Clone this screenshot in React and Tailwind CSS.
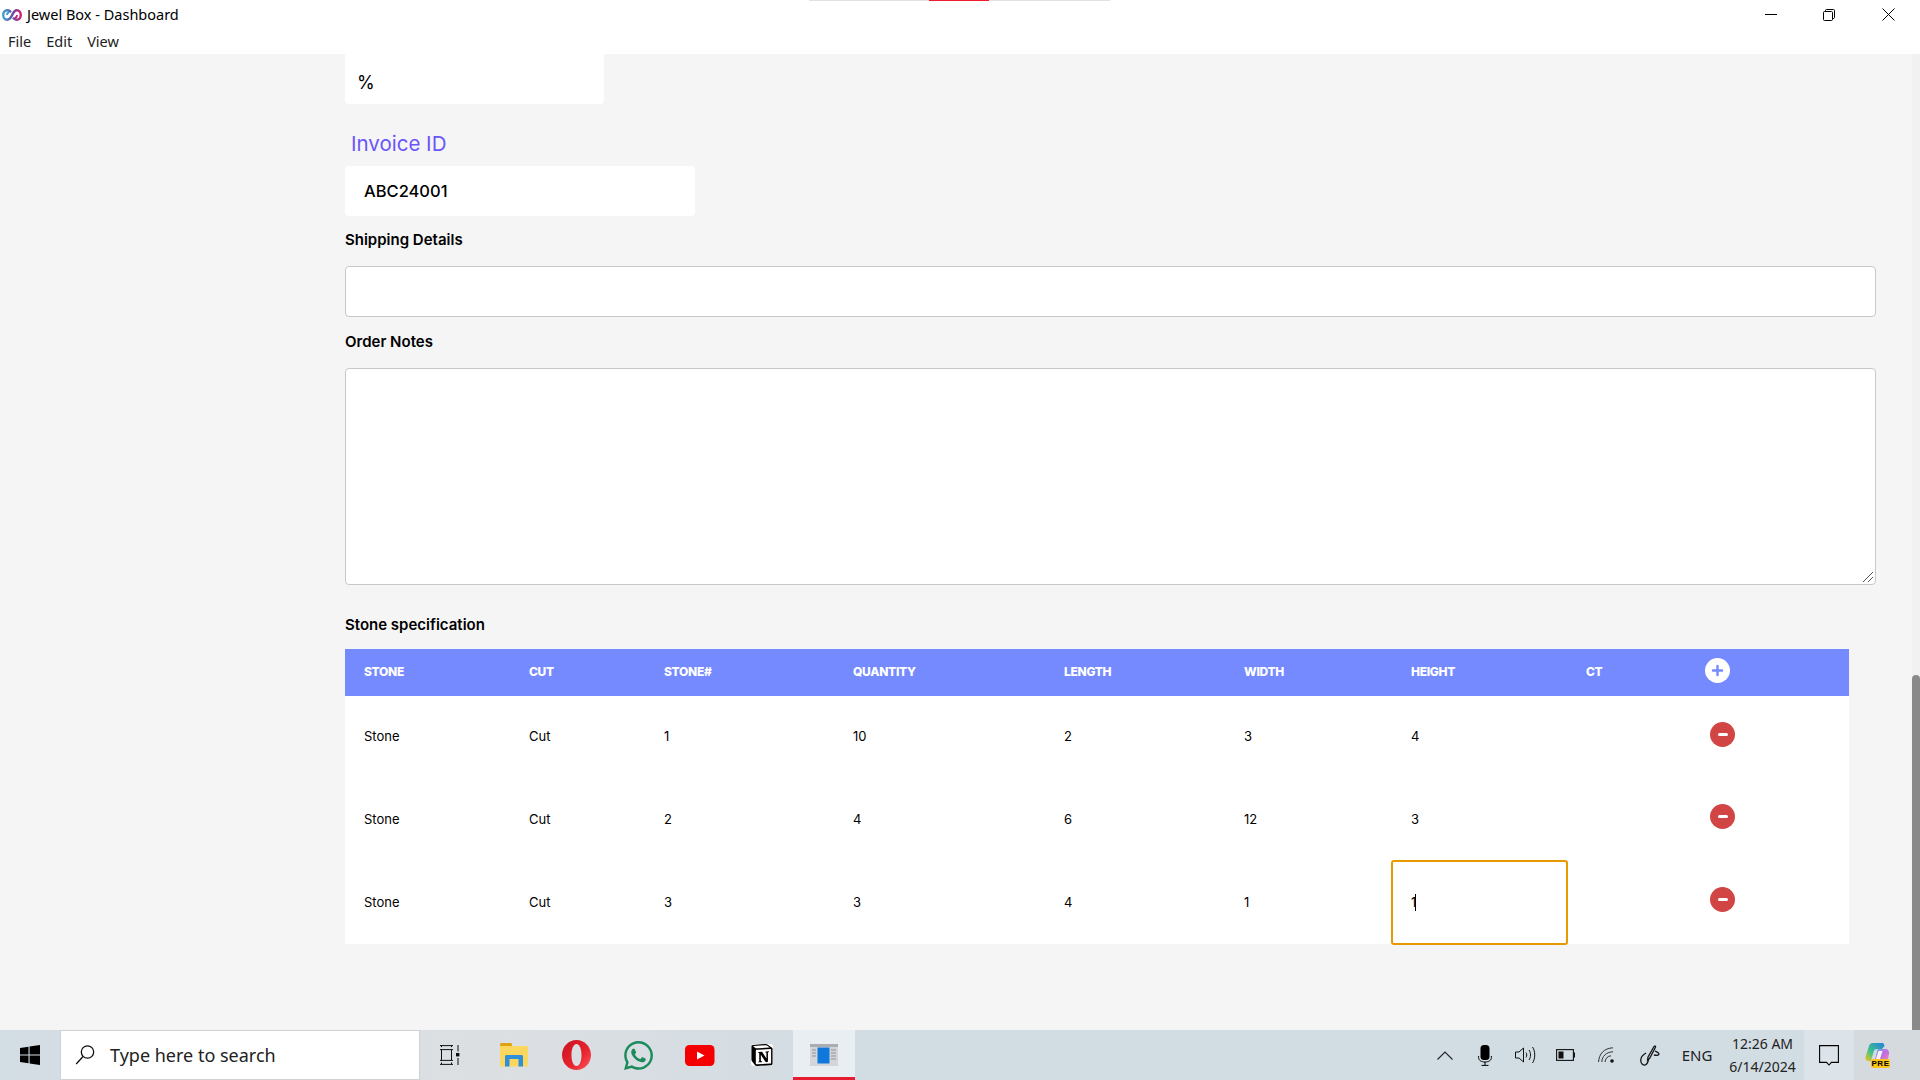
import React from "react";
import { FaWhatsapp } from "react-icons/fa";
import { SiNotion } from "react-icons/si";

const rows = [
  ["Stone", "Cut", "1", "10", "2", "3", "4", ""],
  ["Stone", "Cut", "2", "4", "6", "12", "3", ""],
  ["Stone", "Cut", "3", "3", "4", "1", "1", ""],
];
const heads = ["STONE", "CUT", "STONE#", "QUANTITY", "LENGTH", "WIDTH", "HEIGHT", "CT"];

function MinusBtn() {
  return (
    <span className="mb-[6px] ml-[19px] flex h-[25px] w-[25px] items-center justify-center rounded-full bg-[#d14545]">
      <span className="h-[3px] w-[10px] rounded-sm bg-white" />
    </span>
  );
}

function PlusBtn() {
  return (
    <span className="mb-[5px] ml-[14px] flex h-[25px] w-[25px] items-center justify-center rounded-full bg-white">
      <svg width="13" height="13" viewBox="0 0 13 13"><path d="M6.5 2v9M2 6.5h9" stroke="#758aff" strokeWidth="2.4" strokeLinecap="round" /></svg>
    </span>
  );
}

function Logo() {
  return (
    <svg width="20" height="12" viewBox="0 0 20 12" fill="none">
      <defs>
        <linearGradient id="lg" x1="0" x2="1" y1="0" y2="0">
          <stop offset="0" stopColor="#3aa6c9" />
          <stop offset="0.5" stopColor="#5a4fa8" />
          <stop offset="1" stopColor="#d41f72" />
        </linearGradient>
      </defs>
      <path d="M9 3.2C7.8 1.8 6.6 1.3 5.2 1.3 2.9 1.3 1.2 3.2 1.2 6s1.7 4.7 4 4.7c2.6 0 3.8-2.2 5-4.7s2.4-4.7 4.6-4.7c2.3 0 4 1.9 4 4.7s-1.7 4.7-4 4.7c-1.4 0-2.6-.5-3.8-1.9" stroke="url(#lg)" strokeWidth="2.4" />
      <path d="M5 6c0-1.6 1-2.6 2.2-2.6M15 6c0 1.600-1 2.600-2.200 2.600" stroke="url(#lg)" strokeWidth="1.800" />
    </svg>
  );
}

function WinLogo() {
  return (
    <svg width="20" height="20" viewBox="0 0 20 20" fill="#000">
      <path d="M0 3l8.5-1.3v7.8H0zM9.6 1.500L20 0v9.500H9.600zM0 10.600h8.500v7.700L0 17zM9.600 10.600H20V20L9.600 18.500z" />
    </svg>
  );
}

function SearchIcon() {
  return (
    <svg width="20" height="22" viewBox="0 0 20 22" fill="none" stroke="#111" strokeWidth="1.3">
      <circle cx="12.5" cy="8" r="6.2" />
      <path d="M8 12.5L1.2 20" />
    </svg>
  );
}

function TaskView() {
  return (
    <svg width="20" height="20" viewBox="0 0 20 20" fill="none" stroke="#111" strokeWidth="1">
      <path d="M0 .6h13M0 4.600h13M0 15.400h13M0 19.400h13" />
      <path d="M1.500 .6v1.500M11.500 .6v1.500M1.500 4.600v10.800M11.500 4.600v10.800M1.500 17.500v1.900M11.500 17.500v1.900" />
      <path d="M18 0v6.500M18 13v7" />
      <rect x="16" y="8" width="3.400" height="3.400" fill="#111" stroke="none" />
    </svg>
  );
}

function Folder() {
  return (
    <svg width="28" height="24" viewBox="0 0 28 24">
      <path d="M0 1.500C0 .7.7 0 1.500 0h9c.8 0 1.500.7 1.500 1.500V4H0z" fill="#dfa20f" />
      <path d="M0 3h26.500c.8 0 1.500.7 1.500 1.500V22c0 .8-.7 1.500-1.500 1.500h-25C.700 23.500 0 22.800 0 22z" fill="#fbd75f" />
      <path d="M5 23.500V13.500C5 12.600 5.700 12 6.500 12h15c.8 0 1.500.6 1.500 1.500v10h-4.500V16h-9v7.500z" fill="#2f8fdb" />
    </svg>
  );
}

function Opera() {
  return (
    <svg width="29" height="30" viewBox="0 0 29 30">
      <defs>
        <linearGradient id="op" x1="0" x2="1" y1="0" y2="1">
          <stop offset="0" stopColor="#c9121f" />
          <stop offset="0.6" stopColor="#e8242f" />
          <stop offset="1" stopColor="#ff5a5f" />
        </linearGradient>
      </defs>
      <path fillRule="evenodd" d="M14.500 0C22.500 0 29 6.700 29 15s-6.500 15-14.500 15S0 23.300 0 15 6.500 0 14.500 0zM14.500 4C11.300 4 9.500 9 9.500 15s1.800 11 5 11 5-5 5-11-1.800-11-5-11z" fill="url(#op)" />
    </svg>
  );
}

function YouTube() {
  return (
    <svg width="30" height="21" viewBox="0 0 30 21">
      <rect width="29.500" height="21" rx="4.500" fill="#f50000" />
      <path d="M12 6.500l7.500 4-7.500 4z" fill="#fff" />
    </svg>
  );
}

function AppIcon() {
  return (
    <svg width="28" height="22" viewBox="0 0 28 22">
      <rect width="28" height="22" fill="#d3d5d8" />
      <rect width="28" height="3" fill="#a9acb0" />
      <rect x="7.500" y="3.500" width="12" height="16" fill="#0f78dc" />
      <path d="M2 6h4M2 9h4M2 12h4M21 6h5M21 9h5M21 12h5M21 15h5" stroke="#8f9397" strokeWidth="1" />
    </svg>
  );
}

function Mic() {
  return (
    <svg width="14" height="21" viewBox="0 0 14 21" fill="none">
      <rect x="2.500" y="0" width="9" height="15" rx="3.500" fill="#000" />
      <path d="M.6 11v1.500C.6 15.500 3.500 17 7 17s6.400-1.500 6.400-4.500V11M7 17v3M3.500 20.400h7" stroke="#000" strokeWidth="1" />
    </svg>
  );
}

function Speaker() {
  return (
    <svg width="21" height="18" viewBox="0 0 21 18" fill="none" stroke="#111" strokeWidth="1">
      <path d="M.5 6h3.500L8.500 2v14L4 12H.5z" />
      <path d="M11 6.500c1 1.500 1 3.500 0 5M14 4c2 3 2 7 0 10M17.500 1c3 4.500 3 11.500 0 16" />
    </svg>
  );
}

function Battery() {
  return (
    <svg width="19" height="12" viewBox="0 0 19 12" fill="none">
      <rect x=".6" y=".6" width="16.800" height="10.800" stroke="#111" strokeWidth="1.100" />
      <rect x="2.500" y="2.500" width="5" height="7" fill="#111" />
      <rect x="17.500" y="3.500" width="1.500" height="5" fill="#111" />
    </svg>
  );
}

function Wifi() {
  return (
    <svg width="17" height="16" viewBox="0 0 17 16" fill="none" stroke="#333" strokeWidth="1">
      <path d="M.6 15C.9 7 6 1.200 15 .8M3.800 15C4 9.500 8 5 15 4.800M7 15c.2-3.200 2.500-6 6-6.200" />
      <circle cx="14" cy="14" r="1.800" fill="#111" stroke="none" />
    </svg>
  );
}

function Pen() {
  return (
    <svg width="20" height="21" viewBox="0 0 20 21" fill="none" stroke="#111" strokeWidth="1.300">
      <path d="M8 12L14 1.500c.5-1 2-.2 1.500.8L9.500 13.500 7.600 15z" />
      <path d="M15 6c2 1 4 1.500 4 3s-3 1.500-5 1" />
      <path d="M6 8C2.500 10 .5 13 .8 16c.3 3 2.500 4.500 4.200 4 2-.6 3-3 3.500-5.500" />
    </svg>
  );
}

function Notif() {
  return (
    <svg width="20" height="21" viewBox="0 0 20 21" fill="none" stroke="#000" strokeWidth="1.100">
      <path d="M.6.6h18.800v16.800h-7L10 20l-2.400-2.600H.6z" />
    </svg>
  );
}

function Copilot() {
  return (
    <span className="relative block h-[24px] w-[25px]">
      <svg width="25" height="24" viewBox="0 0 25 24" className="absolute left-0 top-0">
        <defs>
          <linearGradient id="c1" x1="0" x2="1" y1="1" y2="0">
            <stop offset="0" stopColor="#f5c518" />
            <stop offset="0.4" stopColor="#3fc28a" />
            <stop offset="1" stopColor="#1f7fe0" />
          </linearGradient>
          <linearGradient id="c2" x1="0" x2="1" y1="0" y2="1">
            <stop offset="0" stopColor="#55b8f0" />
            <stop offset="0.5" stopColor="#c46be0" />
            <stop offset="1" stopColor="#f48ab0" />
          </linearGradient>
        </defs>
        <path d="M8 0h9c2 0 2 1 2.500 3L17 6h-5c-2 0-3 1-3.500 3L6 18H3c-2 0-3-2-2.500-4L4 3C4.500 1 6 0 8 0z" fill="url(#c1)" />
        <path d="M13 6h7c3 0 4.500 2 4 5l-1 5c-.5 2.500-2 4-4.500 4H9l3-11c.2-1.500.5-3 1-3z" fill="url(#c2)" />
        <path d="M13.500 8h4l-2.500 8h-4z" fill="#f3f4f7" />
      </svg>
      <span className="absolute left-[6px] top-[16px] flex h-[9px] w-[19px] items-center justify-center rounded-[2px] bg-[#fdc41a] font-['Liberation_Sans'] text-[8px] font-bold leading-none tracking-[0.5px] text-black">PRE</span>
    </span>
  );
}

export default function App() {
  return (
    <div className="flex h-screen w-[1920px] flex-col overflow-hidden bg-white font-['Noto_Sans',sans-serif] text-black">
      <header className="relative h-[54px] shrink-0 bg-white">
        <div className="absolute left-[809px] top-0 flex h-px w-[301px] bg-[#e2e2e2]">
          <span className="ml-[120px] h-px w-[60px] bg-[#ee1c2e]" />
        </div>
        <div className="flex h-[29px] items-center pl-[2px]">
          <Logo />
          <span className="ml-[5px] text-[14.5px] leading-none">Jewel Box - Dashboard</span>
          <div className="ml-auto flex items-center pr-[25px]">
            <svg width="12" height="12" viewBox="0 0 12 12" className="mr-[46px]"><path d="M0 5.500h12" stroke="#000" /></svg>
            <svg width="12" height="12" viewBox="0 0 12 12" fill="none" stroke="#000" className="mr-[47px]"><rect x=".5" y="2.500" width="9" height="9" rx="1" /><path d="M2.500 2.500V1.500c0-.6.4-1 1-1h7c.6 0 1 .4 1 1v7c0 .6-.4 1-1 1h-1" /></svg>
            <svg width="13" height="13" viewBox="0 0 13 13" stroke="#000"><path d="M.5.500l12 12M12.500.500l-12 12" /></svg>
          </div>
        </div>
        <nav className="flex h-[25px] items-center gap-[15px] pl-[8px] text-[14.5px] leading-none text-[#222]">
          <span>File</span>
          <span>Edit</span>
          <span>View</span>
        </nav>
      </header>

      <div className="flex min-h-0 flex-1 bg-[#f5f5f5]">
        <main className="flex min-w-0 flex-1 flex-col overflow-hidden pl-[345px] pr-[36px] font-['Inter',sans-serif]">
          <input readOnly value="%" className="h-[50px] w-[259px] shrink-0 rounded-b-[4px] bg-white px-[12px] pt-[6px] text-[18px] outline-none" />
          <label className="ml-[6px] mt-[25px] block text-[20.5px] leading-[30px] text-[#6a55fb]">Invoice ID</label>
          <input readOnly value="ABC24001" className="mt-[7px] h-[50px] w-[350px] shrink-0 rounded-[4px] bg-white pl-[19px] text-[16.5px] font-medium outline-none" />
          <label className="mt-[12px] block text-[15px] font-semibold leading-[24px]">Shipping Details</label>
          <input readOnly className="mt-[14px] h-[51px] w-full shrink-0 rounded-[4px] border border-[#c8c8c8] bg-white outline-none" />
          <label className="mt-[13px] block text-[15px] font-semibold leading-[24px]">Order Notes</label>
          <div className="relative mt-[14px] h-[217px] w-full shrink-0">
            <textarea readOnly className="block h-full w-full rounded-[4px] border border-[#c8c8c8] bg-white outline-none" />
            <svg width="12" height="12" viewBox="0 0 12 12" stroke="#555" className="pointer-events-none absolute bottom-[2px] right-[2px] bg-white">
              <path d="M1 11L11 1M6 11l5-5" />
            </svg>
          </div>
          <label className="mt-[28px] block text-[15px] font-semibold leading-[24px]">Stone specification</label>
          <table className="mt-[12px] w-[1504px] table-fixed border-collapse bg-white text-[13px]">
            <colgroup>
              <col className="w-[165px]" />
              <col className="w-[135px]" />
              <col className="w-[189px]" />
              <col className="w-[211px]" />
              <col className="w-[180px]" />
              <col className="w-[167px]" />
              <col className="w-[175px]" />
              <col className="w-[124px]" />
              <col />
            </colgroup>
            <thead>
              <tr className="h-[47px] bg-[#758aff] text-white">
                {heads.map((h) => (
                  <th key={h} className="pb-[1px] pl-[19px] text-left text-[12px] font-extrabold tracking-[-0.3px]">{h}</th>
                ))}
                <th><PlusBtn /></th>
              </tr>
            </thead>
            <tbody>
              {rows.map((r, i) => (
                <tr key={i} className={i === 0 ? "h-[82px]" : "h-[83px]"}>
                  {r.map((c, j) =>
                    i === 2 && j === 6 ? (
                      <td key={j} className="p-0">
                        <div className="-my-px -ml-px flex h-[85px] w-[177px] items-center rounded-[3px] border-2 border-[#e69a00] pl-[18px]">
                          <span>{c}</span>
                          <span className="-ml-px h-[17px] w-px bg-black" />
                        </div>
                      </td>
                    ) : (
                      <td key={j} className="pl-[19px]">{c}</td>
                    )
                  )}
                  <td><MinusBtn /></td>
                </tr>
              ))}
            </tbody>
          </table>
        </main>
        <div className="flex w-[8px] shrink-0 flex-col bg-[#f1f1f1] pt-[621px]">
          <div className="flex-1 rounded-t-[4px] bg-[#8a8a8a]" />
        </div>
      </div>

      <footer className="flex h-[50px] shrink-0 items-center bg-[linear-gradient(90deg,#d3dde4_0%,#dcdfe2_25%,#d2dce3_45%,#d2dce3_100%)] text-[#111]">
        <div className="flex h-full w-[60px] items-center justify-center"><WinLogo /></div>
        <div className="flex h-full w-[360px] items-center border border-[#cfd2d4] bg-white pl-[14px]">
          <SearchIcon />
          <span className="ml-[15px] text-[18px] leading-none text-[#222]">Type here to search</span>
        </div>
        <div className="flex h-full w-[63px] items-center justify-center pr-[4px]"><TaskView /></div>
        <div className="flex h-full w-[62px] items-center justify-center"><Folder /></div>
        <div className="flex h-full w-[62px] items-center justify-center"><Opera /></div>
        <div className="flex h-full w-[62px] items-center justify-center text-[#1c8a5a]"><FaWhatsapp size={33} /></div>
        <div className="flex h-full w-[62px] items-center justify-center"><YouTube /></div>
        <div className="flex h-full w-[62px] items-center justify-center">
          <span className="flex h-[22px] w-[22px] items-center justify-center rounded-[3px] bg-white"><SiNotion size={24} color="#000" /></span>
        </div>
        <div className="flex h-full w-[62px] items-center justify-center border-b-[3px] border-[#e81c30] bg-[#e9eef2] pt-[3px]"><AppIcon /></div>

        <div className="ml-auto flex h-full items-center">
          <div className="flex w-[40px] justify-center">
            <svg width="16" height="9" viewBox="0 0 16 9" fill="none" stroke="#222" strokeWidth="1.100"><path d="M.5 8.500L8 1l7.500 7.500" /></svg>
          </div>
          <div className="flex w-[40px] justify-center"><Mic /></div>
          <div className="flex w-[40px] justify-center"><Speaker /></div>
          <div className="flex w-[40px] justify-center"><Battery /></div>
          <div className="flex w-[42px] justify-center"><Wifi /></div>
          <div className="flex w-[46px] justify-center"><Pen /></div>
          <div className="flex w-[48px] justify-center text-[15px] text-[#222]">ENG</div>
          <div className="flex w-[83px] flex-col items-center text-[14px] leading-[23px] text-[#222]">
            <span>12:26 AM</span>
            <span>6/14/2024</span>
          </div>
          <div className="flex h-full w-[50px] items-center justify-center bg-[#dde4e9]"><Notif /></div>
          <div className="flex h-full w-[66px] items-center bg-[#d5dadf] pl-[11px]"><Copilot /></div>
        </div>
      </footer>
    </div>
  );
}
